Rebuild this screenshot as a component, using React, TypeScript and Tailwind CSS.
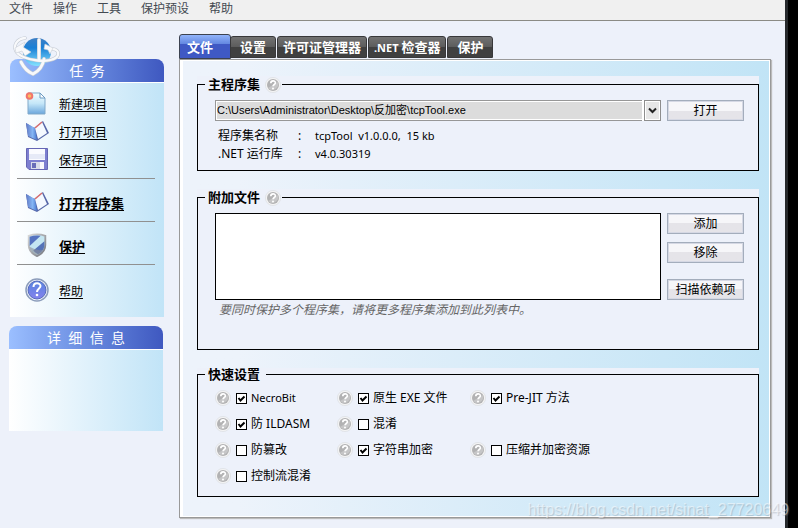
import { ReactNode, useState } from "react";

const menuItems = ["文件", "操作", "工具", "保护预设", "帮助"];

interface Tab {
  id: string;
  prefix?: string;
  label: string;
}

const tabs: Tab[] = [
  { id: "file", label: "文件" },
  { id: "settings", label: "设置" },
  { id: "license", label: "许可证管理器" },
  { id: "inspector", prefix: ".NET ", label: "检查器" },
  { id: "protect", label: "保护" },
];

type IconName = "new" | "book" | "save" | "shield" | "help";

interface Task {
  label: string;
  icon: IconName;
  bold?: boolean;
}

const taskGroups: Task[][] = [
  [
    { label: "新建项目", icon: "new" },
    { label: "打开项目", icon: "book" },
    { label: "保存项目", icon: "save" },
  ],
  [{ label: "打开程序集", icon: "book", bold: true }],
  [{ label: "保护", icon: "shield", bold: true }],
  [{ label: "帮助", icon: "help" }],
];

interface Option {
  id: string;
  label: string;
  checked: boolean;
  latin?: boolean;
}

const initialOptions: (Option | null)[] = [
  { id: "necrobit", label: "NecroBit", checked: true, latin: true },
  { id: "native", label: "原生 EXE 文件", checked: true },
  { id: "prejit", label: "Pre-JIT 方法", checked: true },
  { id: "ildasm", label: "防 ILDASM", checked: true },
  { id: "obfuscate", label: "混淆", checked: false },
  null,
  { id: "tamper", label: "防篡改", checked: false },
  { id: "strings", label: "字符串加密", checked: true },
  { id: "resources", label: "压缩并加密资源", checked: false },
  { id: "flow", label: "控制流混淆", checked: false },
];

function Logo() {
  return (
    <svg width="50" height="44" viewBox="0 0 50 44" aria-hidden="true">
      <defs>
        <linearGradient id="globe" x1="0" y1="0" x2="0" y2="1">
          <stop offset="0" stopColor="#3f7fc4" />
          <stop offset="0.35" stopColor="#1a80d6" />
          <stop offset="1" stopColor="#84e2ff" />
        </linearGradient>
      </defs>
      <circle cx="25" cy="17" r="14" fill="url(#globe)" />
      <g fill="none" stroke="#c3c9d2" strokeLinecap="round" strokeLinejoin="round">
        <path d="M13 3C5 4 1 10 4 16c5 10 38 14 42 4 1-4-2-6-6-6" strokeWidth="3.500" />
        <path d="M9 27c3 6 7 10 12 12 6-3 10-9 11-15" strokeWidth="4" />
        <path d="M27 5v20" strokeWidth="4" />
      </g>
      <g fill="none" stroke="#f8f9fb" strokeLinecap="round" strokeLinejoin="round">
        <path d="M13 3C5 4 1 10 4 16c5 10 38 14 42 4 1-4-2-6-6-6" strokeWidth="2.300" />
        <path d="M9 27c3 6 7 10 12 12 6-3 10-9 11-15" strokeWidth="2.800" />
        <path d="M27 5v20" strokeWidth="2.800" />
      </g>
      <path d="M3 13l10-6-2 5 8 5-6 4-3-5-6 2z" fill="#f8f9fb" stroke="#c9ced6" strokeWidth="0.6" />
      <path d="M33 9l8 4-3 6-2-4-4-1z" fill="#f8f9fb" stroke="#c9ced6" strokeWidth="0.6" />
    </svg>
  );
}

function TaskIcon({ name }: { name: IconName }) {
  if (name === "new") {
    return (
      <svg width="24" height="24" viewBox="0 0 24 24" aria-hidden="true">
        <defs>
          <linearGradient id="page" x1="0" y1="0" x2="0" y2="1">
            <stop offset="0" stopColor="#f4fdff" />
            <stop offset="0.5" stopColor="#c4e6f8" />
            <stop offset="1" stopColor="#6ba6dc" />
          </linearGradient>
        </defs>
        <path d="M3 2h12l5 5v16H3z" fill="url(#page)" stroke="#81a9c9" />
        <path d="M15 2v5h5z" fill="#fff" stroke="#6b9bc2" />
        <circle cx="4.500" cy="5" r="3.800" fill="#f0756c" />
        <circle cx="4.500" cy="5" r="1.800" fill="#ffba61" />
      </svg>
    );
  }
  if (name === "book") {
    return (
      <svg width="24" height="24" viewBox="0 0 24 24" aria-hidden="true">
        <defs>
          <linearGradient id="cover" x1="0" y1="0" x2="1" y2="0">
            <stop offset="0" stopColor="#5f79c6" />
            <stop offset="0.6" stopColor="#86b6f4" />
            <stop offset="1" stopColor="#4878cf" />
          </linearGradient>
        </defs>
        <path d="M1 4l8 5 9-7 6 12-12 8-9-4z" fill="#5767a8" />
        <path d="M1 4l9 5 2 12-9-4z" fill="url(#cover)" />
        <path d="M10 9l7-6 5 11-9 6z" fill="#f5f9ff" />
        <path d="M10 9l7-6" stroke="#d96c6c" strokeWidth="1.500" />
      </svg>
    );
  }
  if (name === "save") {
    return (
      <svg width="24" height="24" viewBox="0 0 24 24" aria-hidden="true">
        <path d="M1.500 1.500h21v21H4l-2.500-2.500z" fill="#7d7fd0" stroke="#6566b4" />
        <path d="M4 2h16v11H4z" fill="#fafbff" />
        <path d="M4 7h16v5H4z" fill="#e6eaf7" />
        <path d="M6 15h13v7H6z" fill="#d9dcea" />
        <path d="M7 16h4v5H7z" fill="#686db8" />
        <path d="M15 15h4v7h-4z" fill="#f8f8fd" />
      </svg>
    );
  }
  if (name === "shield") {
    return (
      <svg width="24" height="24" viewBox="0 0 24 26" aria-hidden="true">
        <defs>
          <linearGradient id="rim" x1="0" y1="0" x2="1" y2="1">
            <stop offset="0" stopColor="#d8d8d8" />
            <stop offset="1" stopColor="#73767e" />
          </linearGradient>
        </defs>
        <path d="M3 3q9-3 18 0v10q0 8-9 12Q3 21 3 13z" fill="#c4e6f2" stroke="url(#rim)" strokeWidth="2" />
        <path d="M4 4q6-2 12-1L4 14z" fill="#5573c0" />
        <path d="M20 9v5q-1 6-7 9-4-2-5-4z" fill="#5573b8" />
        <path d="M4 15q1 6 8 9 5-2 7-6-7 2-15-3z" fill="#8b8e95" opacity="0.6" />
      </svg>
    );
  }
  return (
    <svg width="24" height="24" viewBox="0 0 24 24" aria-hidden="true">
      <defs>
        <linearGradient id="ball" x1="0" y1="0" x2="0" y2="1">
          <stop offset="0" stopColor="#5784df" />
          <stop offset="1" stopColor="#8582ed" />
        </linearGradient>
      </defs>
      <circle cx="12" cy="12" r="11" fill="#f7f9ff" stroke="#8c9dbb" strokeWidth="1.500" />
      <circle cx="12" cy="12" r="9" fill="url(#ball)" stroke="#5469b9" />
      <path d="M8.500 9c0-5 7-4.500 7-1 0 2.500-3.500 2.500-3.500 6" fill="none" stroke="#fff" strokeWidth="2" />
      <circle cx="12" cy="17" r="1.300" fill="#fff" />
    </svg>
  );
}

function HelpBadge() {
  return (
    <svg className="shrink-0" width="16" height="16" viewBox="0 0 16 16" aria-hidden="true">
      <circle cx="8" cy="8" r="7.600" fill="#f3f3f4" stroke="#d9dbdf" strokeWidth="0.6" />
      <circle cx="8" cy="8" r="6" fill="#b2b2b3" />
      <path d="M3 11a6 6 0 0 0 10-6z" fill="#c6c6c7" />
      <path
        d="M5.800 6.300c0-3.100 4.600-3 4.600-.5 0 1.700-2.300 1.700-2.300 3.400"
        fill="none"
        stroke="#fff"
        strokeWidth="1.700"
      />
      <circle cx="8" cy="11.500" r="1" fill="#fff" />
    </svg>
  );
}

function PanelTitle({ children }: { children: string }) {
  return (
    <h2 className="h-6 rounded-t-lg border-b border-white bg-linear-to-r from-[#9bbfff] to-[#3f58c0] text-center text-sm leading-[23px] whitespace-pre text-white">
      {children}
    </h2>
  );
}

function PushButton({ children }: { children: string }) {
  return (
    <button
      type="button"
      className="h-[21px] w-[77px] shrink-0 border border-[#a3adbc] bg-linear-to-b from-[#f6f6f9] from-50% to-[#e5e4e9] to-50% text-center leading-[19px] whitespace-nowrap shadow-[inset_0_0_0_1px_#d5d8e4]"
    >
      {children}
    </button>
  );
}

interface GroupProps {
  title: string;
  help?: boolean;
  children: ReactNode;
}

function Group({ title, help, children }: GroupProps) {
  return (
    <section className="bg-[#edf1fa]">
      <fieldset className="min-w-0 border border-black pr-[14px] pl-[17px]">
        <legend
          className={`-ml-[10px] flex items-center gap-[5px] pl-[3px] text-[13px] font-bold ${help ? "h-[17px] pr-px" : "h-[13px] pr-[6px]"}`}
        >
          {title}
          {help ? <HelpBadge /> : null}
        </legend>
        {children}
      </fieldset>
    </section>
  );
}

export default function App() {
  const [activeTab, setActiveTab] = useState("file");
  const [options, setOptions] = useState(initialOptions);

  const toggle = (id: string) => {
    setOptions((current) =>
      current.map((option) => (option?.id === id ? { ...option, checked: !option.checked } : option)),
    );
  };

  return (
    <div className="relative min-h-screen border-r-[10px] border-black bg-[#edf1fa] font-['Noto_Sans','Noto_Sans_CJK_SC',sans-serif] text-xs text-black">
      <div className="min-h-screen border-r-[3px] border-[#26292c]">
        <nav className="flex h-[21px] gap-5 border-b border-[#8b8b85] bg-[#f0f0f0] px-[9px] font-['Noto_Sans_CJK_SC',sans-serif] text-[#444a52]">
          {menuItems.map((item) => (
            <button key={item} type="button" className="h-4 leading-4">
              {item}
            </button>
          ))}
        </nav>

        <div className="flex gap-[15px] pt-[13px] pr-[14px] pl-[9px]">
          <aside className="w-[155px] shrink-0 pt-[25px]">
            <section className="relative ml-px">
              <div className="absolute -top-6 left-[2px]">
                <Logo />
              </div>
              <PanelTitle>{"任  务"}</PanelTitle>
              <div className="divide-y divide-[#909090] bg-linear-to-r from-white to-[#c1e4f7] pr-[9px] pl-[7px]">
                {taskGroups.map((group, index) => (
                  <ul key={index} className="pt-[9px] pb-[5px] first:pt-[6px] last:pt-[11px] last:pb-[13px]">
                    {group.map((task) => (
                      <li key={task.label} className="flex h-7 items-center gap-2.5 pl-2">
                        <TaskIcon name={task.icon} />
                        <a
                          href="#"
                          className={`pt-1 underline underline-offset-2 ${task.bold ? "text-[13px] font-bold" : ""}`}
                        >
                          {task.label}
                        </a>
                      </li>
                    ))}
                  </ul>
                ))}
              </div>
            </section>

            <section className="mt-[9px] mr-px">
              <PanelTitle>{"详  细  信  息"}</PanelTitle>
              <div className="h-[81px] bg-linear-to-r from-white to-[#c1e4f7]" />
            </section>
          </aside>

          <main className="min-w-0 flex-1">
            <div role="tablist" className="flex h-[25px] items-end gap-px text-[13px] font-bold text-white">
              {tabs.map((tab) => (
                <button
                  key={tab.id}
                  type="button"
                  role="tab"
                  aria-selected={tab.id === activeTab}
                  onClick={() => setActiveTab(tab.id)}
                  className={
                    tab.id === activeTab
                      ? "-mr-[2px] h-[25px] w-[52px] rounded-t-[3px] border border-[#3c4250] bg-linear-to-b from-[#91b4fb] via-[#6286df] via-40% to-[#3f59c4] to-40% pr-2.5 leading-[25px]"
                      : "mb-px h-[22px] rounded-t-[3px] border border-[#38383a] bg-linear-to-b from-[#727272] via-[#5c5c5c] via-50% to-[#404040] to-50% px-[5px] leading-5 whitespace-nowrap nth-[2]:px-[9px] last:px-[9px]"
                  }
                >
                  {tab.prefix ? <span className="text-[11px]">{tab.prefix}</span> : null}
                  {tab.label}
                </button>
              ))}
            </div>

            <div className="space-y-[18px] border border-[#999] bg-linear-to-r from-[#edf3fb] from-10% to-[#c1e4f6] pt-4 pr-[11px] pb-5 pl-[17px] shadow-[inset_2px_0_0_1px_white,inset_0_0_0_1px_white,1px_1px_1px_#bbb]">
              <Group title="主程序集" help>
                <div className="mt-[7px] flex gap-1.5">
                  <div className="relative min-w-0 flex-1">
                    <select
                      aria-label="主程序集"
                      className="block h-[21px] w-full appearance-none border border-[#979797] bg-[#dcdcdc] pl-px font-['Liberation_Sans','Noto_Sans_CJK_SC',sans-serif] text-[11px] leading-[19px] shadow-[inset_0_0_0_1px_white]"
                    >
                      <option>C:\Users\Administrator\Desktop\反加密\tcpTool.exe</option>
                    </select>
                    <div className="pointer-events-none absolute inset-y-0 right-0 flex w-[17px] items-center justify-center border border-[#8d8d8d] bg-[#e6e6e6] shadow-[inset_0_0_0_1px_white,-2px_0_0_white]">
                      <svg width="9" height="7" viewBox="0 0 9 7" aria-hidden="true">
                        <path d="M1 1.500l3.500 3.500L8 1.500" fill="none" stroke="#222" strokeWidth="2" />
                      </svg>
                    </div>
                  </div>
                  <PushButton>打开</PushButton>
                </div>
                <dl className="mt-[6px] mb-[7px] grid grid-cols-[80px_17px_1fr] pl-[3px] leading-[18px]">
                  <dt>程序集名称</dt>
                  <dd>:</dd>
                  <dd className="text-[11px] leading-[18px] whitespace-pre">tcpTool  v1.0.0.0,  15 kb</dd>
                  <dt>.NET 运行库</dt>
                  <dd>:</dd>
                  <dd className="text-[11px] leading-[18px]">v4.0.30319</dd>
                </dl>
              </Group>

              <Group title="附加文件" help>
                <div className="mt-[7px] flex gap-1.5">
                  <select aria-label="附加文件" size={4} className="h-[87px] min-w-0 flex-1 border border-black bg-white" />
                  <div className="flex flex-col gap-2">
                    <PushButton>添加</PushButton>
                    <PushButton>移除</PushButton>
                    <div className="mt-2 flex">
                      <PushButton>扫描依赖项</PushButton>
                    </div>
                  </div>
                </div>
                <p className="mt-px mb-[30px] pl-1 leading-[18px] text-[#666] italic">
                  要同时保护多个程序集，请将更多程序集添加到此列表中。
                </p>
              </Group>

              <Group title="快速设置">
                <div className="mt-1 mb-[7px] grid grid-cols-[122px_133px_1fr]">
                  {options.map((option, index) =>
                    option ? (
                      <div key={option.id} className="flex h-[26px] items-center">
                        <HelpBadge />
                        <input
                          id={option.id}
                          type="checkbox"
                          checked={option.checked}
                          onChange={() => toggle(option.id)}
                          className="peer ml-[5px] size-[11px] shrink-0 appearance-none border border-black bg-white"
                        />
                        <svg
                          className="pointer-events-none invisible -ml-[11px] size-[11px] shrink-0 peer-checked:visible"
                          viewBox="0 0 11 11"
                          aria-hidden="true"
                        >
                          <path d="M2.500 5l2 2.500L8.500 3.500" fill="none" stroke="#000" strokeWidth="2" />
                        </svg>
                        <label
                          htmlFor={option.id}
                          className={`pl-1 whitespace-nowrap ${option.latin ? "text-[11px]" : ""}`}
                        >
                          {option.label}
                        </label>
                      </div>
                    ) : (
                      <div key={index} />
                    ),
                  )}
                </div>
              </Group>
            </div>
          </main>
        </div>
      </div>

      <p className="pointer-events-none absolute -right-px bottom-2 font-['Liberation_Sans',sans-serif] text-base leading-5 text-white/50 [text-shadow:1px_1px_1px_rgb(120_130_140/0.35)]">
        https://blog.csdn.net/sinat_27720649
      </p>
    </div>
  );
}
